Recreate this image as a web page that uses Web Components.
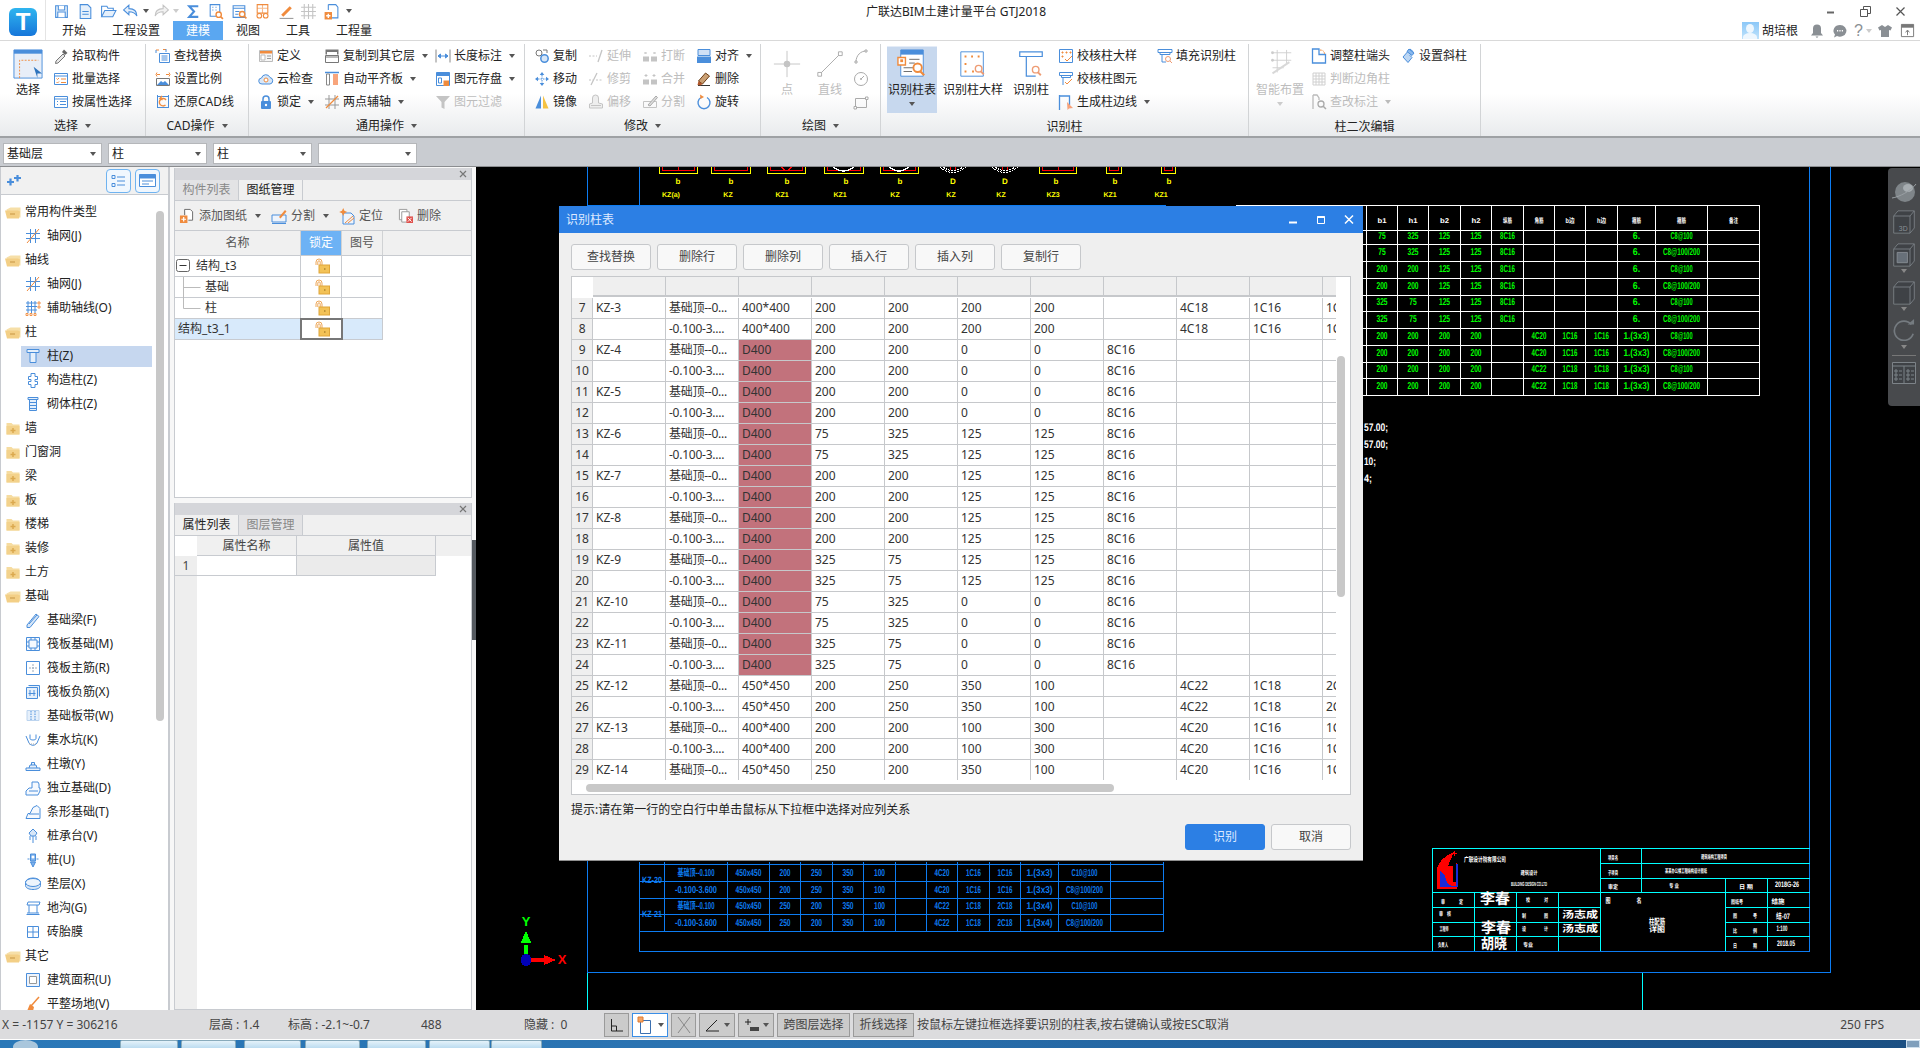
<!DOCTYPE html>
<html lang="zh">
<head>
<meta charset="utf-8">
<title>GTJ2018</title>
<style>
html,body{margin:0;padding:0;height:100%;overflow:hidden;background:#000}
body{font:12px/16px "Noto Sans","Noto Sans CJK SC",sans-serif;color:#222}
</style>
</head>
<body>
<gt-app>
  <gt-titlebar></gt-titlebar>
  <gt-ribbon>
    <rb-group label="选择" w="146" caret>
      <rb-big icon="select" label="选择" style="margin-left:6px;width:44px"></rb-big>
      <rb-col style="margin-left:3px">
        <rb-item icon="picker">拾取构件</rb-item>
        <rb-item icon="batch">批量选择</rb-item>
        <rb-item icon="attr">按属性选择</rb-item>
      </rb-col>
    </rb-group>
    <rb-group label="CAD操作" w="103" caret>
      <rb-col style="margin-left:9px">
        <rb-item icon="find">查找替换</rb-item>
        <rb-item icon="scale">设置比例</rb-item>
        <rb-item icon="restore">还原CAD线</rb-item>
      </rb-col>
    </rb-group>
    <rb-group label="通用操作" w="276" caret>
      <rb-col style="margin-left:9px;width:66px">
        <rb-item icon="define">定义</rb-item>
        <rb-item icon="cloud">云检查</rb-item>
        <rb-item icon="lock" caret>锁定</rb-item>
      </rb-col>
      <rb-col style="width:111px">
        <rb-item icon="copyfloor" caret>复制到其它层</rb-item>
        <rb-item icon="align" caret>自动平齐板</rb-item>
        <rb-item icon="axis2" caret>两点辅轴</rb-item>
      </rb-col>
      <rb-col>
        <rb-item icon="dim" caret>长度标注</rb-item>
        <rb-item icon="store" caret>图元存盘</rb-item>
        <rb-item icon="filter" off>图元过滤</rb-item>
      </rb-col>
    </rb-group>
    <rb-group label="修改" w="236" caret>
      <rb-col style="margin-left:9px;width:54px">
        <rb-item icon="copy">复制</rb-item>
        <rb-item icon="move">移动</rb-item>
        <rb-item icon="mirror">镜像</rb-item>
      </rb-col>
      <rb-col style="width:54px">
        <rb-item icon="extend" off>延伸</rb-item>
        <rb-item icon="trim" off>修剪</rb-item>
        <rb-item icon="offset" off>偏移</rb-item>
      </rb-col>
      <rb-col style="width:54px">
        <rb-item icon="break" off>打断</rb-item>
        <rb-item icon="merge" off>合并</rb-item>
        <rb-item icon="split" off>分割</rb-item>
      </rb-col>
      <rb-col>
        <rb-item icon="alignb" caret>对齐</rb-item>
        <rb-item icon="erase">删除</rb-item>
        <rb-item icon="rotate">旋转</rb-item>
      </rb-col>
    </rb-group>
    <rb-group label="绘图" w="120" caret>
      <rb-big icon="point" label="点" off style="margin-left:6px;width:40px"></rb-big>
      <rb-big icon="line" label="直线" off style="width:46px"></rb-big>
      <rb-col style="margin-left:0">
        <rb-item icon="arc" off></rb-item>
        <rb-item icon="circle" off></rb-item>
        <rb-item icon="rect" off></rb-item>
      </rb-col>
    </rb-group>
    <rb-group label="识别柱" w="368">
      <rb-big icon="rectable" label="识别柱表" caret active style="margin-left:6px;width:50px"></rb-big>
      <rb-big icon="recdetail" label="识别柱大样" style="margin-left:1px;width:70px"></rb-big>
      <rb-big icon="reccol" label="识别柱" style="width:46px"></rb-big>
      <rb-col style="margin-left:4px;width:99px">
        <rb-item icon="chk1">校核柱大样</rb-item>
        <rb-item icon="chk2">校核柱图元</rb-item>
        <rb-item icon="genedge" caret>生成柱边线</rb-item>
      </rb-col>
      <rb-col>
        <rb-item icon="fillcol">填充识别柱</rb-item>
      </rb-col>
    </rb-group>
    <rb-group label="柱二次编辑" w="232">
      <rb-big icon="smart" label="智能布置" caret off style="margin-left:5px;width:52px"></rb-big>
      <rb-col style="margin-left:5px;width:89px">
        <rb-item icon="adjust">调整柱端头</rb-item>
        <rb-item icon="corner" off>判断边角柱</rb-item>
        <rb-item icon="query" off caret>查改标注</rb-item>
      </rb-col>
      <rb-col>
        <rb-item icon="slant">设置斜柱</rb-item>
      </rb-col>
    </rb-group>
  </gt-ribbon>
  <gt-combos>
    <gt-combo>基础层</gt-combo>
    <gt-combo>柱</gt-combo>
    <gt-combo>柱</gt-combo>
    <gt-combo></gt-combo>
  </gt-combos>
  <gt-main>
    <gt-tree></gt-tree>
    <gt-docks>
      <gt-dock tabs="构件列表,图纸管理" active="1" style="height:330px"><gt-drawings></gt-drawings></gt-dock>
      <gt-dock tabs="属性列表,图层管理" active="0" style="flex:1"><gt-props></gt-props></gt-dock>
    </gt-docks>
    <gt-splitter></gt-splitter>
    <gt-cad>
      <gt-dialog title="识别柱表"></gt-dialog>
      <gt-viewbar></gt-viewbar>
    </gt-cad>
  </gt-main>
  <gt-status></gt-status>
  <gt-taskbar></gt-taskbar>
</gt-app>

<script>
const B='#4a8edb',O='#f08b3d',G='#c4c4c4',L='#e6f0fb';
const st=`fill="none" stroke="${B}"`;
const gs=`fill="none" stroke="${G}"`;
const ICONS={
  save:`<path d="M2.5 2.5h11v11h-11z" fill="${L}" stroke="${B}"/><path d="M5 2.5v4h6v-4M4.5 13.5v-5h7v5" fill="#fff" stroke="${B}"/>`,
  doc:`<path d="M3 1.5h7l3 3v10H3z" fill="${L}" stroke="${B}"/><path d="M5 8h6M5 10.5h6" ${st}/>`,
  open:`<path d="M1.5 13V3h5l1 2h5v2" ${st}/><path d="M1.5 13l3-6h10.500l-3 6z" fill="${L}" stroke="${B}"/>`,
  undo:`<path d="M6.500 2L1.500 6.500 6.500 11V8.300c3.500 0 6 1 7.500 4 0-4-2.500-7-7.500-7z" fill="${L}" stroke="${B}"/>`,
  redo:`<path d="M9.500 2l5 4.500-5 4.500V8.300c-3.500 0-6 1-7.500 4 0-4 2.500-7 7.500-7z" fill="#f2f2f2" stroke="${G}"/>`,
  sigma:`<path d="M12.500 3H4l4.500 5L4 13h8.500" fill="none" stroke="${B}" stroke-width="2"/>`,
  qcalc:`<path d="M3 1.500h9v11H3z" ${st}/><path d="M5 4h1M8 4h1M5 6.500h1M8 6.500h1" stroke="${B}"/><circle cx="11" cy="11" r="2.500" fill="#fff" stroke="${O}" stroke-width="1.300"/><path d="M13 13l2 2" stroke="${O}" stroke-width="1.500"/>`,
  qtab:`<path d="M2 2.500h11v11H2z" ${st}/><path d="M2 5h11M4 8h4M4 10.500h3" stroke="${B}"/><circle cx="10.500" cy="10.500" r="2.500" fill="#fff" stroke="${O}" stroke-width="1.300"/><path d="M12.500 12.500l2 2" stroke="${O}" stroke-width="1.500"/>`,
  qglass:`<path d="M3 1.500h10v8H3z" fill="none" stroke="${O}"/><path d="M3 5h10M8 1.500v8" stroke="${O}" stroke-opacity=".6"/><circle cx="5" cy="12" r="2.200" fill="none" stroke="${O}"/><circle cx="11" cy="12" r="2.200" fill="none" stroke="${O}"/>`,
  qpen:`<path d="M3 11L11 3l2 2-8 8z" fill="${O}"/><path d="M1.500 14.500h13" stroke="#999"/>`,
  qgrid:`<path d="M4 1v14M8 1v14M12 1v14M1 4h14M1 8h14M1 12h14" stroke="${G}"/>`,
  qnew:`<path d="M5 1.500h7l2 2.500v10H8" fill="none" stroke="${B}"/><path d="M1.500 8.500h7v7h-7z" fill="${O}"/><path d="M5 10v4M3 12h4" stroke="#fff" stroke-width="1.300"/><path d="M5 1.500v5" stroke="${B}"/>`,
  picker:`<path d="M3 13l7-7 2 2-7 7-2.500.5z" fill="#e8e8e8" stroke="#777"/><path d="M9 4l2-2.500 3.500 3.500L12 7z" fill="#666"/>`,
  batch:`<path d="M1.500 2.500h13v11h-13z" fill="#fff" stroke="${B}"/><path d="M1.500 5h13" stroke="${B}"/><path d="M3.500 7.500l1 1 1.500-1.500M3.500 11l1 1 1.500-1.500" fill="none" stroke="${O}"/><path d="M8 8h5M8 11.500h5" stroke="${O}"/>`,
  attr:`<path d="M1.500 2.500h13v11h-13z" fill="#fff" stroke="${B}"/><path d="M1.500 5h13" stroke="${B}"/><path d="M4 7.500h1M7 7.500h6M4 10.500h1M7 10.500h6" stroke="${B}"/>`,
  find:`<path d="M4.500 5.500h10v9h-10z" fill="#fff" stroke="${B}"/><path d="M6.500 8h6M6.500 10h6M6.500 12h6" stroke="${B}"/><path d="M1 2h3M8 1.500h3" stroke="${O}"/><path d="M1 2v3" stroke="${B}"/><path d="M11 1v3" stroke="${B}"/>`,
  scale:`<path d="M1.500 7.500h13v7h-13z" fill="#fff" stroke="#777"/><path d="M2 14l4-4 2 1.500 2-1.500 4 4z" fill="${B}"/><path d="M2 3.500h3M14 3.500h-3M2 1.500l-1 2 1 2M14 1.500l1 2-1 2" ${`fill="none" stroke="${O}"`}/>`,
  restore:`<path d="M2.500 2.500h11v11h-11z" ${st}/><path d="M11 6A3.700 3.700 0 1 0 10.500 11" fill="none" stroke="${O}" stroke-width="1.400"/><path d="M7 2l-2 2.500 2.500 1.500" fill="none" stroke="${O}" stroke-width="1.400"/><path d="M2 2h1M13 2h1M2 13h1M13 13h1" stroke="${B}" stroke-width="2"/>`,
  define:`<path d="M1.500 2.500h13v11h-13z" fill="#f6f6f6" stroke="#bbb"/><path d="M2 3h12v2.500H2z" fill="${O}"/><path d="M3 7h4v5H3z" fill="#fff" stroke="#bbb"/><path d="M9 8h4M9 10.500h4" stroke="#999"/>`,
  cloud:`<path d="M4 13a3 3 0 0 1-.5-6A4.500 4.500 0 0 1 12 6.500 3.300 3.300 0 0 1 12 13z" fill="#d9e7f7" stroke="${B}"/><circle cx="8" cy="9" r="2" fill="#fff" stroke="${O}"/>`,
  lock:`<path d="M5 7V5a3 3 0 0 1 6 0v2" fill="none" stroke="${B}" stroke-width="1.500"/><rect x="3" y="7" width="10" height="8" rx="1" fill="${B}"/><circle cx="8" cy="11" r="1.200" fill="#fff"/>`,
  copyfloor:`<path d="M1.500 1.500h13v5h-13z" fill="#777"/><path d="M3 4h10v3H3z" fill="#fff"/><path d="M1.500 7.500h13v7h-13z" fill="#fff" stroke="#777"/><path d="M1.500 9h13" stroke="#777"/>`,
  align:`<path d="M1 1.500h14" stroke="${B}" stroke-width="1.500"/><path d="M2.500 3h3v11h-3z" fill="#fff" stroke="#888"/><path d="M9 3h5v11H9z" fill="#f8a57c"/>`,
  axis2:`<path d="M1 5h14M1 11h14M5 1v14M11 1v14" stroke="#999"/><path d="M2 14L14 2" stroke="${O}" stroke-width="1.300"/>`,
  dim:`<path d="M1 1.500v13M15 1.500v13" stroke="#888"/><path d="M3 8h10M3 8l2.500-2v4zM13 8l-2.500-2v4z" fill="${B}" stroke="${B}"/>`,
  store:`<path d="M1.500 1.500h13v13h-13z" fill="#fff" stroke="${B}"/><path d="M1.500 1.500h13V5h-13z" fill="${B}"/><path d="M3.500 7h3v5h-3z" ${st}/><path d="M8.500 9.500h5.500V15H8.500z" fill="${O}"/>`,
  filter:`<path d="M1 2h14L9.500 8v7l-3-1.500V8z" fill="${G}"/>`,
  copy:`<circle cx="5" cy="5" r="3" fill="none" stroke="#777"/><circle cx="10.500" cy="10.500" r="3.700" fill="#d7e6f7" stroke="${B}" stroke-width="1.500"/><path d="M9 2h4v3" fill="none" stroke="#777"/>`,
  move:`<path d="M8 1l2.300 3H5.700zM8 15l2.300-3H5.700zM1 8l3-2.300v4.600zM15 8l-3-2.300v4.600z" fill="${B}"/><path d="M8 4v8M4 8h8" stroke="${B}" stroke-dasharray="1.500 1"/>`,
  mirror:`<path d="M7 1.500v13H1.500z" fill="${B}"/><path d="M9 1.500v13h5.500z" fill="#f5c242"/>`,
  extend:`<path d="M1 8h8" stroke="${G}" stroke-dasharray="2 1.500"/><path d="M10 14L14 2" stroke="${G}" stroke-width="1.300"/>`,
  trim:`<path d="M1 9h4M8 9h7" stroke="${G}" stroke-dasharray="2 1.500"/><path d="M3 14L9 2" stroke="${G}" stroke-width="1.300"/>`,
  offset:`<path d="M1.500 14v-4l3-1V4a3 3 0 0 1 6 0v5l4 1v4z" fill="#eee" stroke="${G}"/><path d="M3 11.500h10" stroke="${G}"/>`,
  break:`<path d="M1 8.500h6v5H1zM9 8.500h6v5H9z" fill="${G}"/><path d="M2.500 4l2 2M2.500 6l2-2M11.500 4l2 2M11.500 6l2-2" stroke="${G}"/>`,
  merge:`<path d="M1 8.500h6v5H1zM9 8.500h6v5H9z" fill="${G}"/><path d="M4 3v3M2.500 4.500h3M12 3v3M10.500 4.500h3" stroke="${G}"/>`,
  split:`<path d="M1.500 7.500h13v6h-13z" ${gs}/><path d="M6 11L14 2l1.500 1.500L8 12z" fill="#ddd" stroke="#aaa"/>`,
  alignb:`<path d="M2 1.500h12v6H2z" fill="#cfe0f5" stroke="${B}"/><path d="M1 8.500h14v6.500H1z" fill="${B}"/>`,
  erase:`<path d="M2 14.500h12" stroke="#333"/><path d="M2.500 10l7-8 4 3-7 8z" fill="#caa074" stroke="#6b3d16"/><path d="M2.500 10l4 3-2 1.500-3-.5z" fill="#b0562a"/>`,
  rotate:`<path d="M5 3.500A6 6 0 1 0 11 3.500" fill="none" stroke="${B}" stroke-width="1.400"/><path d="M4 .5l4 2.500-3.500 2z" fill="${O}"/>`,
  select:`<path d="M1 1h30v30H1z" fill="#e8eef8" stroke="${B}"/><path d="M1 1h30v4H1z" fill="${B}"/><path d="M7 31V12h20" fill="none" stroke="${O}" stroke-dasharray="2 1.500"/><path d="M22 19l9 7-5 0v5z" fill="#2f74bd"/>`,
  point:`<path d="M16 2v28M2 16h28" stroke="${G}"/><circle cx="16" cy="16" r="3.500" fill="${G}"/>`,
  line:`<path d="M5 27L27 5" stroke="#aaa"/><path d="M3 25h4v4H3zM25 3h4v4h-4z" fill="#fff" stroke="#aaa"/>`,
  arc:`<path d="M3 14C3 7 8 3 13 3" fill="none" stroke="#aaa"/><path d="M2 13h2v2H2zM12 2h2v2h-2z" fill="#fff" stroke="#aaa"/>`,
  circle:`<circle cx="8" cy="8" r="6.500" fill="none" stroke="#aaa"/><path d="M8 8l3-3" stroke="#aaa"/><circle cx="8" cy="8" r="1" fill="#aaa"/>`,
  rect:`<path d="M2.500 4.500h11v9h-11z" fill="none" stroke="#aaa"/><path d="M1 12.500h2.500v2.500H1zM12.500 3h2.500v2.500h-2.500z" fill="#fff" stroke="#aaa"/>`,
  rectable:`<path d="M4 1h24v28H4z" fill="#fff" stroke="${B}"/><path d="M4 1h24v5H4z" fill="${B}"/><path d="M1 9h8v8H1z" fill="#fff" stroke="${O}" stroke-width="1.500"/><path d="M3.500 11h3v3h-3z" fill="${O}"/><path d="M7 20h11M7 24h9M13 11h11M13 15h6" stroke="#666"/><circle cx="22" cy="20" r="4.500" fill="#fff" stroke="${O}" stroke-width="2"/><path d="M25 24l4 4" stroke="${O}" stroke-width="2.500"/>`,
  recdetail:`<path d="M3 3h24v26H3z" fill="none" stroke="${B}"/><path d="M7 7h2v2H7zM14 7h2v2h-2zM21 7h2v2h-2zM7 15h2v2H7zM7 23h2v2H7zM15 23h2v2h-2z" fill="${O}"/><circle cx="22" cy="21" r="3.500" fill="#fff" stroke="#ee9c74" stroke-width="1.500"/><path d="M24.500 24l3 3" stroke="#ee9c74" stroke-width="2"/>`,
  reccol:`<path d="M4 3h24v5H4z" fill="none" stroke="${B}" stroke-width="1.300"/><path d="M8 8h16M11 8v21h10" fill="none" stroke="${B}" stroke-width="1.300"/><circle cx="21" cy="22" r="3.500" fill="#fff" stroke="#ee9c74" stroke-width="1.500"/><path d="M23.500 25l3 3" stroke="#ee9c74" stroke-width="2"/>`,
  chk1:`<path d="M1.500 1.500h13v13h-13z" fill="none" stroke="${B}"/><path d="M4 4h1v1H4zM8 4h1v1H8zM12 4h1v1h-1zM4 8h1v1H4z" fill="${O}" stroke="${O}"/><path d="M7 11l2 2 5-5" fill="none" stroke="${O}"/>`,
  chk2:`<path d="M1.500 1.500h13v3h-13zM3.500 4.500v2h9v-2M5 6.500V14" fill="none" stroke="${B}"/><path d="M7 11l2 2 5-5" fill="none" stroke="${O}"/>`,
  genedge:`<path d="M1.500 1v15M1.500 2h10v9" fill="none" stroke="${B}" stroke-width="1.300"/><path d="M9 8l6 6-4 .5L9.500 16z" fill="#f7a27a"/>`,
  fillcol:`<path d="M1 1.500h14v3H1zM3 4.500v2h10v-2M5 6.500V14h4" fill="none" stroke="${B}"/><circle cx="11" cy="11" r="2.500" fill="#fff" stroke="#ee9c74"/><path d="M13 13l2 2" stroke="#ee9c74"/>`,
  smart:`<path d="M8 4h20M8 12h20M8 20h12M13 1v24M23 1v14" stroke="#d0d0d0"/><path d="M8 26L26 14" stroke="#d8d8d8" stroke-width="2"/><circle cx="8" cy="4" r="1.500" fill="#ccc"/><circle cx="8" cy="12" r="1.500" fill="#ccc"/>`,
  adjust:`<path d="M1.500 1v14h13V6.500H8V1z" fill="none" stroke="${B}" stroke-width="1.300"/><path d="M9 2c3 0 4.500 1.500 4.500 4" fill="none" stroke="${O}" stroke-dasharray="1.500 1"/>`,
  corner:`<path d="M2 2h12v12H2zM2 5h12M2 8h12M2 11h12M5 2v12M8 2v12M11 2v12" fill="none" stroke="#d0d0d0"/>`,
  query:`<path d="M2 1h4l2 3v2M2 1v14" fill="none" stroke="#bbb" stroke-width="1.300"/><circle cx="10" cy="10" r="3" fill="none" stroke="#aaa" stroke-width="1.300"/><path d="M12 12l3 3" stroke="#aaa" stroke-width="1.500"/>`,
  slant:`<path d="M1 9l7-8 3 2.500-3 4 2 2-4 5z" fill="#bcd6f3" stroke="${B}" transform="translate(2 0)"/><path d="M9 1l5 4-2 2.500-5-4z" fill="#8ab8ec" stroke="${B}"/>`,
  folderopen:`<path d="M1.500 5.500l4-2h10v10h-13z" fill="#f6dfa8"/><path d="M0 6.500h13l2 1-1 7H2z" fill="#f3cf86"/><path d="M5 10h5" stroke="#d6a958" stroke-width="1.500"/>`,
  folder:`<path d="M1.500 3h5l1.500 1.500h6.500v10h-13z" fill="#f6dca0"/><path d="M1.500 6h13v8.500h-13z" fill="#f3d28c"/><path d="M8 8v5M5.500 10.500h5" stroke="#dba94f" stroke-width="1.500"/>`,
  grid:`<path d="M1 5.500h14M1 10.500h14M5.500 1v14M10.500 1v14" stroke="${B}"/><path d="M2 15L14 1" stroke="${O}"/>`,
  grid2:`<path d="M1 3h11M1 6.500h11M1 10h11M3 1v12M6.500 1v12M10 1v12" stroke="${B}"/><path d="M13 2h2v2h-2zM13 6h2v2h-2zM1 13.500h2v2H1zM5 13.500h2v2H5zM9 13.500h2v2H9z" fill="none" stroke="${O}" stroke-width=".9"/>`,
  col:`<path d="M2 1.500h12v3H2zM5 4.500V14.500h6V4.500" fill="#e6f0fb" stroke="${B}"/>`,
  gzz:`<path d="M6 1.500h4v3h2.500v3H10v2h2.500v3H10v3H6v-3H3.500v-3H6v-2H3.500v-3H6z" fill="#fff" stroke="${B}"/>`,
  qtz:`<path d="M3 1.500h10v2H3zM4.500 3.500h7v11h-7zM4.500 6.500h7M4.500 9.500h7M4.500 12.500h7" fill="#e6f0fb" stroke="${B}"/>`,
  jcl:`<path d="M2 13l9-11 3 2.500-9 11H2z" fill="#d7e6f7" stroke="${B}"/><path d="M4 12l8-9" stroke="${B}"/>`,
  fb:`<path d="M1.500 1.500h13v13h-13zM4 4h8v8H4zM1.500 6h2.500M1.500 10h2.500M12 6h2.500M12 10h2.500M6 1.500V4M10 1.500V4M6 12v2.500M10 12v2.500" fill="#f5f9fe" stroke="${B}"/>`,
  fz:`<path d="M1.500 1.500h13v13h-13z" fill="#fff" stroke="${B}"/><path d="M8 4v8M4 8h8" stroke="#9ab" stroke-dasharray="2 1"/>`,
  ff:`<path d="M1.500 3.500h11v11h-11zM3.500 1.500h11v11" fill="#e6f0fb" stroke="${B}"/><path d="M5 6v6M9 6v6M3.500 9.500h7" stroke="${B}"/>`,
  bd:`<path d="M2 2.500h12v10H2z" fill="#e6f0fb" stroke="#bcd4ef"/><path d="M6 3v9M10 3v9" stroke="${B}" stroke-dasharray="1.500 1"/>`,
  jsk:`<path d="M1 4l3 7c2 3 6 3 8 0l3-7M5 2.500v4c0 2 6 2 6 0v-4" fill="none" stroke="${B}"/><path d="M4 12h8" stroke="#aaa" stroke-dasharray="1 1"/>`,
  zd:`<path d="M1 12h14v2.500H1zM4 12l1-3h6l1 3M6.500 9V6.500h3V9" fill="#e6f0fb" stroke="${B}"/>`,
  dl:`<path d="M1 11l3-3h3V2h6l1 2v4h1v3l-2 4H1z" fill="#f5f9fe" stroke="${B}"/><path d="M4 11h9" stroke="${B}"/>`,
  tx:`<path d="M1 14.500l2-5h2l3-6 4-2 3 3v10zM4 10h10" fill="#f5f9fe" stroke="${B}"/>`,
  cpt:`<path d="M8 1l4 4-2 3H6L4 5z" fill="#d7e6f7" stroke="${B}"/><path d="M5 8v4M8 8v7M11 8v4" stroke="${B}"/>`,
  pile:`<path d="M5.500 2h5v7h-5zM2.500 7h2M11.500 7h2M5.500 10h5L8 15z" fill="#7fb1ea" stroke="${B}"/><circle cx="8" cy="5" r="1.500" fill="#fff"/>`,
  dc:`<ellipse cx="8" cy="6.500" rx="7.500" ry="4.500" fill="#d7e6f7" stroke="${B}"/><path d="M.5 6.500v3c0 2.500 3.500 4 7.500 4s7.500-1.500 7.500-4v-3" fill="#d7e6f7" stroke="${B}"/><ellipse cx="8" cy="6.500" rx="7.500" ry="4" fill="#edf4fc" stroke="${B}"/>`,
  dg:`<path d="M1.500 14.500h13M2 13h12M3 2h12l-1 3H2zM4 5v8M12 5v8" fill="none" stroke="${B}"/>`,
  ztm:`<path d="M2.500 2.500h11v11h-11zM8 2.500v11M2.500 8h11" fill="#fff" stroke="${B}"/>`,
  jzmj:`<path d="M1.500 1.500h13v13h-13z" fill="#eef4fc" stroke="${B}"/><path d="M4.500 4.500h7v7h-7z" fill="#fff" stroke="#999"/>`,
  pzcd:`<path d="M14 1L6 10" stroke="${O}" stroke-width="1.500"/><path d="M2 15l3-7 4 3-1 4z" fill="${O}"/><path d="M1 15h8" stroke="${B}" stroke-width="1.500"/>`,
  tadd:`<path d="M6 1.500h6l2.500 2.500v9H10" fill="#fff" stroke="#666"/><path d="M6 1.500v6" stroke="#666"/><path d="M1 8h8v8H1z" fill="${O}"/><path d="M5 9.500v5M2.500 12h5" stroke="#fff" stroke-width="1.300"/>`,
  tsplit:`<path d="M1 7h14v7H1zM1 15.500h14" fill="#eef4fc" stroke="${B}"/><path d="M8 9L14 2l1.500 1.500-6 7z" fill="${O}"/>`,
  tloc:`<path d="M4 5h8l3 3v8H4z" fill="#eef4fc" stroke="${B}"/><path d="M6 15l8-7M9 15l6-5" stroke="${O}"/><path d="M4 0l1.500 3.500L9 5 5.500 6.500 4 10 2.500 6.500-1 5 2.500 3.500z" fill="${O}" transform="translate(1 0) scale(.8)"/>`,
  tdel:`<path d="M1.500 1.500h8v11h-8z" fill="#fff" stroke="#999"/><path d="M4 4h8v11H4z" fill="#fff" stroke="#999"/><path d="M9 9h7v7H9z" fill="#e0514c"/><path d="M10.500 10.500l4 4M14.500 10.500l-4 4" stroke="#fff"/>`,
  padlock:`<path d="M2 7V4a3 3 0 0 1 6 0v3M3.800 7V4a1.200 1.200 0 0 1 2.400 0v3" fill="none" stroke="#eea85a"/><rect x="5" y="7" width="10.500" height="8" fill="#f3c257" stroke="#e0a63a"/><path d="M10 11h1.500" stroke="#8a6418"/>`,
  bell:`<path d="M8 1.500a4 4 0 0 1 4 4V10l2 2.500H2L4 10V5.500a4 4 0 0 1 4-4zM6.500 13.500h3L8 15z" fill="#8a8f94"/>`,
  chat:`<path d="M8 2a6.500 5.800 0 1 1-3 11L2 14.500l1-3A6.500 5.800 0 0 1 8 2z" fill="#8a8f94"/><path d="M5 7.800h1.200M7.400 7.800h1.200M9.800 7.800H11" stroke="#fff" stroke-width="1.400"/>`,
  shirt:`<path d="M5 2L1 4.500l1.500 3L4 7v7h8V7l1.500.5 1.500-3L11 2 8 4z" fill="#8a8f94"/>`,
  skin:`<path d="M1.500 1.500h13v13h-13z" fill="#fff" stroke="#777"/><path d="M1.500 1.500h13V5h-13z" fill="#777"/><path d="M8 13V8M6 10l2-2.500 2 2.500" fill="none" stroke="#777"/>`,
};

function setup(el,css,html){
  if(el.shadowRoot) return el.shadowRoot;
  el.attachShadow({mode:'open'});
  el.shadowRoot.innerHTML=`<style>${css}</style>${html}`;
  return el.shadowRoot;
}
function svg(name,size){
  const vb=['select','point','line','rectable','recdetail','reccol','smart'].includes(name)?32:16;
  return `<svg width="${size}" height="${size}" viewBox="0 0 ${vb} ${vb}" style="display:block;flex:none;overflow:visible" shape-rendering="geometricPrecision">${ICONS[name]||''}</svg>`;
}
const caretCss=`.caret{display:inline-block;width:0;height:0;border:3.500px solid transparent;border-top:4px solid #555;border-bottom:0;flex:none}`;

class GtApp extends HTMLElement{
  connectedCallback(){
    setup(this,`:host{display:flex;flex-direction:column;width:1920px;height:1048px;overflow:hidden;background:#fff}`,`<slot></slot>`);
  }
}

class GtTitlebar extends HTMLElement{
  connectedCallback(){
    // centres of the quick access icons, the gaps are worked out from them
    const qat=[['save',61],['doc',85],['open',108],['undo',130],['c',146],['redo',162],['c2',177],['sigma',195],['qcalc',217],['qtab',241],['qglass',264],['qpen',288],['qgrid',310],['qnew',333],['c3',351]];
    let x=46,qh='';
    qat.forEach(([n,c])=>{
      const isC=n[0]=='c'&&n.length<3;
      const w=isC?7:17;
      const left=c-w/2-x;
      x=c+w/2;
      qh+=isC?`<span class="caret" style="margin-left:${left}px${n=='c2'?';border-top-color:#ccc':''}"></span>`:`<span style="margin-left:${left}px">${svg(n,17)}</span>`;
    });
    setup(this,`
      :host{display:flex;height:41px;border-bottom:1px solid #d9d9d9;box-sizing:border-box;background:#fff}
      ${caretCss}
      .logo{width:46px;flex:none;border-right:1px solid #e4e4e4;box-sizing:border-box;padding:8px 0 0 9px;position:relative}
      .logo b{display:flex;align-items:center;justify-content:center;width:28px;height:28px;border-radius:6px;background:linear-gradient(#2fb5ef,#1676da);color:#fff;font:bold 24px/28px "Liberation Sans",sans-serif}
      .right{flex:1;display:flex;flex-direction:column}
      .qrow{height:21px;display:flex;align-items:center}
      .qat{display:flex;align-items:center;width:820px;flex:none;padding-top:1px}
      .title{width:190px;white-space:nowrap;padding-top:2px}
      .win{margin-left:auto;display:flex;align-items:center;padding-top:1px}
      .win span{width:35px;display:flex;justify-content:center}
      .trow{height:19px;display:flex;align-items:stretch}
      .tabs{display:flex;margin-left:3px}
      .tabs span{padding:0 13px;line-height:19px}
      .tabs .on{background:#5aa7f1;color:#fff}
      .user{margin-left:auto;display:flex;align-items:center;margin-right:5px}
      .user .ava{width:17px;height:17px;background:linear-gradient(#8cc8f8,#bfe2fb);margin-right:3px;position:relative;overflow:hidden}
      .user .ava i{position:absolute;left:4.500px;top:2px;width:8px;height:9px;border-radius:50%;background:#eef7fe}
      .user .ava u{position:absolute;left:1.500px;top:11px;width:14px;height:8px;border-radius:50% 50% 0 0;background:#eef7fe}
    `,`
      <div class="logo"><b>T</b></div>
      <div class="right">
        <div class="qrow">
          <div class="qat">${qh}</div>
          <div class="title">广联达BIM土建计量平台 GTJ2018</div>
          <div class="win">
            <span><svg width="10" height="10"><path d="M1 6.500h7" stroke="#666" stroke-width="2"/></svg></span>
            <span><svg width="11" height="11"><path d="M3.500 3V.5h7v7H8M.5 3.500h7v7h-7z" fill="#fff" stroke="#555"/></svg></span>
            <span style="margin-right:2px"><svg width="11" height="11"><path d="M1.500 1.500l8 8M9.500 1.500l-8 8" stroke="#555" stroke-width="1.200"/></svg></span>
          </div>
        </div>
        <div class="trow">
          <div class="tabs"><span>开始</span><span>工程设置</span><span class="on">建模</span><span>视图</span><span>工具</span><span>工程量</span></div>
          <div class="user">
            <div class="ava"><i></i><u></u></div>
            <span>胡培根</span>
            <span style="margin-left:11px">${svg('bell',16)}</span>
            <span style="margin-left:7px">${svg('chat',16)}</span>
            <span style="margin-left:6px;font:16px/16px 'Liberation Sans',sans-serif;color:#8a8f94;width:10px">?</span>
            <span class="caret" style="border-top-color:#ccc;margin:0 5px 0 2px"></span>
            <span>${svg('shirt',16)}</span>
            <span style="margin-left:7px">${svg('skin',15)}</span>
          </div>
        </div>
      </div>
    `);
  }
}

class GtRibbon extends HTMLElement{
  connectedCallback(){
    setup(this,`:host{display:flex;height:97px;box-sizing:border-box;padding-top:3px;background:linear-gradient(#fff 0,#fff 55%,#e9ebed 100%);border-bottom:2px solid #9ea1a4}`,`<slot></slot>`);
  }
}
class RbGroup extends HTMLElement{
  connectedCallback(){
    const c=this.hasAttribute('caret')?`<span class="caret"></span>`:'';
    setup(this,`
      :host{display:flex;flex-direction:column;box-sizing:border-box;width:${this.getAttribute('w')}px;height:92px;border-right:1px solid #d2d4d6;flex:none}
      ${caretCss}
      .body{display:flex;height:72px}
      .label{height:19px;display:flex;align-items:center;justify-content:center;gap:7px;padding-top:${c?0:2}px}
    `,`<div class="body"><slot></slot></div><div class="label"><span>${this.getAttribute('label')}</span>${c}</div>`);
  }
}
class RbCol extends HTMLElement{
  connectedCallback(){
    setup(this,`:host{display:flex;flex-direction:column;flex:none}`,`<slot></slot>`);
  }
}
class RbItem extends HTMLElement{
  connectedCallback(){
    const off=this.hasAttribute('off');
    setup(this,`
      :host{display:flex;align-items:center;height:23px;white-space:nowrap;flex:none;color:${off?'#bdbdbd':'#222'}}
      ${caretCss}
      .ic{width:16px;margin-right:3px;flex:none}
      .caret{margin-left:7px;${off?'border-top-color:#bbb':''}}
    `,`<span class="ic">${svg(this.getAttribute('icon'),16)}</span><slot></slot>${this.hasAttribute('caret')?'<span class="caret"></span>':''}`);
  }
}
class RbBig extends HTMLElement{
  connectedCallback(){
    const off=this.hasAttribute('off'),on=this.hasAttribute('active');
    setup(this,`
      :host{display:flex;flex-direction:column;align-items:center;flex:none;height:67px;margin-top:2px;box-sizing:border-box;white-space:nowrap;color:${off?'#bdbdbd':'#222'};${on?'background:#c7d8ee;border-top:1px solid #e4ecf7;':''}}
      ${caretCss}
      .ic{height:${on?35:36}px;display:flex;align-items:flex-end;padding-bottom:3px;box-sizing:border-box}
      .t{line-height:16px}
      .caret{margin-top:4px;${off?'border-top-color:#ccc':''}}
    `,`<div class="ic">${svg(this.getAttribute('icon'),30)}</div><div class="t">${this.getAttribute('label')}</div>${this.hasAttribute('caret')?'<span class="caret"></span>':''}`);
  }
}

class GtCombos extends HTMLElement{
  connectedCallback(){
    setup(this,`:host{display:flex;height:29px;box-sizing:border-box;padding:5px 0 0 3px;gap:6px;background:#c9ccd1;border-bottom:1px solid #8b8d90}`,`<slot></slot>`);
  }
}
class GtCombo extends HTMLElement{
  connectedCallback(){
    setup(this,`
      :host{display:flex;align-items:center;width:99px;height:21px;box-sizing:border-box;background:#fff;border:1px solid #b5b7ba;padding:0 5px 0 3px}
      ${caretCss}
      .caret{margin-left:auto}
    `,`<slot></slot><span class="caret"></span>`);
  }
}

class GtMain extends HTMLElement{
  connectedCallback(){
    setup(this,`:host{display:flex;height:843px;background:#f7f7f7;overflow:hidden}`,`<slot></slot>`);
  }
}

const TREE=[
 [0,'folderopen','常用构件类型'],[1,'grid','轴网(J)'],[0,'folderopen','轴线'],[1,'grid','轴网(J)'],[1,'grid2','辅助轴线(O)'],
 [0,'folderopen','柱'],[1,'col','柱(Z)',1],[1,'gzz','构造柱(Z)'],[1,'qtz','砌体柱(Z)'],
 [0,'folder','墙'],[0,'folder','门窗洞'],[0,'folder','梁'],[0,'folder','板'],[0,'folder','楼梯'],[0,'folder','装修'],[0,'folder','土方'],
 [0,'folderopen','基础'],[1,'jcl','基础梁(F)'],[1,'fb','筏板基础(M)'],[1,'fz','筏板主筋(R)'],[1,'ff','筏板负筋(X)'],[1,'bd','基础板带(W)'],
 [1,'jsk','集水坑(K)'],[1,'zd','柱墩(Y)'],[1,'dl','独立基础(D)'],[1,'tx','条形基础(T)'],[1,'cpt','桩承台(V)'],[1,'pile','桩(U)'],
 [1,'dc','垫层(X)'],[1,'dg','地沟(G)'],[1,'ztm','砖胎膜'],[0,'folderopen','其它'],[1,'jzmj','建筑面积(U)'],[1,'pzcd','平整场地(V)']
];
class GtTree extends HTMLElement{
  connectedCallback(){
    const rows=TREE.map(([lv,ic,t,sel])=>`<div class="row l${lv}"><div class="in${sel?' sel':''}"><span class="ic">${svg(ic,16)}</span><span>${t}</span></div></div>`).join('');
    setup(this,`
      :host{display:flex;flex-direction:column;width:170px;flex:none;box-sizing:border-box;background:#fff;border-left:1px solid #c8cbd0;border-right:2px solid #c8cbd0;position:relative;overflow:hidden}
      .top{height:28px;flex:none;display:flex;align-items:center;background:#f1f1f1;border-bottom:1px solid #c8cbd0;box-sizing:border-box;padding-left:6px}
      .bt{width:25px;height:24px;box-sizing:border-box;border:1px solid #6fb3f0;border-radius:4px;background:#f0f7fe;display:flex;align-items:center;justify-content:center}
      .list{padding-top:5px;flex:1;overflow:hidden}
      .row{height:24px;display:flex;align-items:center;white-space:nowrap}
      .in{display:flex;align-items:center;height:21px;width:131px;box-sizing:border-box}
      .l0 .in{padding-left:4px}
      .l1 .in{margin-left:20px;padding-left:4px}
      .sel{background:#c6d7ef}
      .ic{width:16px;margin-right:4px;flex:none}
      .l0 .ic{margin-right:4px}
      .l1 .ic{margin-right:6px}
      .thumb{position:absolute;left:155px;top:44px;width:8px;height:510px;background:#c8c8c8;border-radius:4px}
    `,`
      <div class="top">
        <svg width="14" height="12" style="overflow:visible"><path d="M0 7h7M3.500 3.500v7M7 3h7M10.500 0v6.500" stroke="${B}" stroke-width="2.200"/></svg>
        <div class="bt" style="margin-left:85px"><svg width="15" height="14"><path d="M1 1.500h3v3H1zM1 9.500h3v3H1zM6 3h8M6 7h8M6 11h8" fill="none" stroke="${B}"/></svg></div>
        <div class="bt" style="margin-left:4px"><svg width="17" height="15"><path d="M.5 1.500h16v12H.5z" fill="#fff" stroke="${B}"/><path d="M.5 1.500h16v4H.5z" fill="${B}"/><path d="M3 8h11M3 11h7" stroke="${B}"/></svg></div>
      </div>
      <div class="list">${rows}</div>
      <div class="thumb"></div>
    `);
  }
}

class GtDocks extends HTMLElement{
  connectedCallback(){
    setup(this,`
      :host{display:flex;flex-direction:column;gap:5px;width:298px;flex:none;margin-left:4px;padding-top:1px;box-sizing:border-box}
    `,`<slot></slot>`);
  }
}
class GtDock extends HTMLElement{
  connectedCallback(){
    const tabs=this.getAttribute('tabs').split(','),act=+this.getAttribute('active');
    setup(this,`
      :host{display:flex;flex-direction:column;box-sizing:border-box;border:1px solid #c8cbd0;border-top:0;background:#fff;min-height:0}
      .cap{height:12px;flex:none;background:#d5d6da;display:flex;justify-content:flex-end;align-items:center;padding-right:4px}
      .tabs{height:21px;flex:none;display:flex;background:#f0f0f0;border-bottom:1px solid #c8cbd0;box-sizing:border-box}
      .tabs span{width:64px;text-align:center;line-height:20px;color:#888;background:#e3e3e5;border-right:1px solid #c8cbd0;box-sizing:border-box;font-size:12px}
      .tabs span.on{color:#222;background:#f0f0f0}
      .body{flex:1;min-height:0;display:flex;flex-direction:column}
      ::slotted(*){flex:1}
    `,`
      <div class="cap"><svg width="8" height="8"><path d="M1 1l6 6M7 1L1 7" stroke="#777" stroke-width="1.200"/></svg></div>
      <div class="tabs">${tabs.map((t,i)=>`<span class="${i==act?'on':''}">${t}</span>`).join('')}</div>
      <div class="body"><slot></slot></div>
    `);
  }
}
class GtDrawings extends HTMLElement{
  connectedCallback(){
    const lock=`<span style="padding-left:2px">${svg('padlock',16)}</span>`;
    const rows=[['结构_t3','box'],['基础','a'],['柱','b'],['结构_t3_1','sel']].map(([t,k])=>{
      let name='';
      if(k=='box') name=`<svg class="tw" width="15" height="14" style="margin:0 5px 0 1px"><rect x=".5" y=".5" width="13" height="12" rx="2" fill="#fff" stroke="#666"/><path d="M3.500 6.500h7" stroke="#333"/></svg>${t}`;
      if(k=='a') name=`<svg width="30" height="21" style="flex:none"><path d="M8.500 0v21M8.500 10.500h17" stroke="#bbb" fill="none"/></svg>${t}`;
      if(k=='b') name=`<svg width="30" height="21" style="flex:none"><path d="M8.500 0v10.500h17" stroke="#bbb" fill="none"/></svg>${t}`;
      if(k=='sel') name=`<span style="padding-left:3px">${t}</span>`;
      return `<div class="tr ${k=='sel'?'sel':''}"><div class="n">${name}</div><div class="l ${k=='sel'?'cur':''}">${lock}</div><div class="f"></div></div>`;
    }).join('');
    setup(this,`
      :host{display:flex;flex-direction:column;background:#fff;min-height:0;color:#333}
      .bar{height:30px;flex:none;display:flex;align-items:center;background:#f0f0f0;border-bottom:1px solid #c8cbd0;box-sizing:border-box;padding-left:4px;color:#555}
      ${caretCss}
      .bar svg{margin-right:4px}
      .bar span.t{white-space:nowrap}
      .head{height:25px;flex:none;display:flex;background:#f0f0f0;color:#555;box-sizing:border-box;border-bottom:1px solid #c8cbd0}
      .head div{text-align:center;line-height:24px;box-sizing:border-box;border-right:1px solid #d0d2d4}
      .w1{width:126px}.w2{width:41px}.w3{width:41px}
      .head .w2{background:#6db2f5;color:#fff}
      .tr{display:flex;height:21px;width:208px;box-sizing:border-box;border-bottom:1px solid #c8cbd0}
      .tr .n{width:126px;display:flex;align-items:center;box-sizing:border-box;border-right:1px solid #c8cbd0}
      .tr .l{width:41px;box-sizing:border-box;border-right:1px solid #c8cbd0;display:flex;align-items:center;justify-content:center}
      .tr .f{width:41px;box-sizing:border-box;border-right:1px solid #c8cbd0}
      .sel{background:#d8eafb}
      .cur{background:#fff;outline:2px solid #777;outline-offset:-1px}
    `,`
      <div class="bar">
        ${svg('tadd',15)}<span class="t" style="margin-left:1px">添加图纸</span><span class="caret" style="margin:0 10px 0 8px"></span>
        ${svg('tsplit',16)}<span class="t">分割</span><span class="caret" style="margin:0 10px 0 8px"></span>
        ${svg('tloc',16)}<span class="t">定位</span>
        <span style="width:15px"></span>${svg('tdel',15)}<span class="t">删除</span>
      </div>
      <div class="head"><div class="w1">名称</div><div class="w2">锁定</div><div class="w3">图号</div></div>
      ${rows}
    `);
  }
}
class GtProps extends HTMLElement{
  connectedCallback(){
    setup(this,`
      :host{display:grid;grid-template-columns:22px 100px 139px 1fr;grid-template-rows:20px 20px 1fr;background:#fff;color:#444;min-height:0}
      div{box-sizing:border-box;text-align:center;line-height:19px}
      .h{background:#f0f0f0;border-right:1px solid #c8cbd0;border-bottom:1px solid #c8cbd0}
      .g{background:#eee;border-bottom:1px solid #c8cbd0}
      .c{background:#fff;border-right:1px solid #c8cbd0;border-bottom:1px solid #c8cbd0}
      .v{background:#ebebeb;border-right:1px solid #c8cbd0;border-bottom:1px solid #c8cbd0}
    `,`
      <div></div><div class="h">属性名称</div><div class="h">属性值</div><div class="h" style="border-right:0;border-bottom:0"></div>
      <div class="g">1</div><div class="c"></div><div class="v"></div><div></div>
      <div style="background:#eee"></div>
    `);
  }
}

// the narrow gutter between the docks and the drawing, with its dark grip
class GtSplitter extends HTMLElement{
  connectedCallback(){
    setup(this,`
      :host{display:block;width:4px;flex:none;padding-top:373px;box-sizing:border-box;background:#f7f7f7}
      div{height:100px;background:#555a60}
    `,`<div></div>`);
  }
}

function cadDrawing(){
  let s='';
  const W='#fff',Gn='#00ff00',Bl='#0d7cf2',Cy='#00ffff',Ye='#ffff00',Re='#ff0000';
  const l=(x1,y1,x2,y2,c,w)=>{s+=`<path d="M${x1} ${y1}L${x2} ${y2}" stroke="${c}" stroke-width="${w||1}" fill="none"/>`};
  const t=(x,y,str,c,size,len,anchor)=>{s+=`<text x="${x}" y="${y}" fill="${c}" font-size="${size}" ${len?`textLength="${len}" lengthAdjust="spacingAndGlyphs"`:''} text-anchor="${anchor||'middle'}" dominant-baseline="middle">${str}</text>`};

  // outer frames
  l(587.5,167,587.5,973,Bl); l(639.5,167,639.5,205,Bl);
  l(1809.5,167,1809.5,951,Bl); l(1830.5,167,1830.5,973,Bl);
  l(587,972.5,1831,972.5,Bl); l(587,205.5,1166,205.5,Bl,1); l(1236,205.5,1363,205.5,W);
  l(587.5,973,587.5,1010,Cy); l(1642.5,973,1642.5,1010,Cy);

  // section drawings on top
  [[659,697,1],[711,750,0],[767,805,2],[824,863,3],[880,918,3],[1039,1076,1],[1106,1121,0],[1161,1175,0]].forEach(([a,b,k])=>{
    s+=`<path d="M${a+.5} 167V173.500H${b+.5}V167" stroke="${Ye}" fill="none"/>`;
    s+=`<path d="M${a+3.500} 167V170.500H${b-2.500}V167" stroke="${Re}" fill="none"/>`;
    if(k==1) l((a+b)/2+.5,167,(a+b)/2+.5,170,Re);
    if(k==2){l(a+14.500,167,a+17.500,170,Re);l(a+24.500,167,a+21.500,170,Re)}
    if(k==3) s+=`<path d="M${a+9} 167Q${(a+b)/2} 175 ${b-9} 167" stroke="${W}" fill="none" stroke-width="1.300"/>`;
  });
  [[940,966],[992,1018]].forEach(([a,b])=>{
    s+=`<path d="M${a} 167Q${(a+b)/2} 178 ${b} 167M${a+3} 167Q${(a+b)/2} 174 ${b-3} 167" stroke="${W}" stroke-dasharray="2 1" fill="none"/>`;
    l((a+b)/2-3,167,(a+b)/2-2,170,Re); l((a+b)/2+3,167,(a+b)/2+2,170,Re);
  });
  [[678,'b',662,'KZ(a)'],[731,'b',719,'KZ'],[787,'b',773,'KZ1'],[846,'b',831,'KZ1'],[900,'b',886,'KZ'],[953,'D',942,'KZ'],[1005,'D',992,'KZ'],[1056,'b',1044,'KZ3'],[1115,'b',1101,'KZ1'],[1169,'b',1152,'KZ1']].forEach(([x,c,lx,lb])=>{
    t(x,182,c,Ye,8); t(lx+9,195,lb,Ye,7,0); 
  });

  // white column table
  const vx=[1366.500,1397.500,1428.500,1460.500,1491.500,1523.500,1554.500,1585.500,1617.500,1655.500,1707.500,1759.500];
  const hy=[205.500,230.500,244.500,261.500,278.500,295.500,311.500,328.500,345.500,362.500,378.500,395.500];
  hy.forEach(y=>l(1363,y,1760,y,W));
  vx.forEach(x=>l(x,205,x,396,W));
  ['b1','h1','b2','h2','纵筋','角筋','b边','h边','箍筋','箍筋','备注'].forEach((h,i)=>t((vx[i]+vx[i+1])/2,221,h,W,7,h.length*3.5+2));
  const g=[
   ['75','325','125','125','8C16','','','','6.','C8@100'],
   ['75','325','125','125','8C16','','','','6.','C8@100/200'],
   ['200','200','125','125','8C16','','','','6.','C8@100'],
   ['200','200','125','125','8C16','','','','6.','C8@100/200'],
   ['325','75','125','125','8C16','','','','6.','C8@100'],
   ['325','75','125','125','8C16','','','','6.','C8@100/200'],
   ['200','200','200','200','','4C20','1C16','1C16','1.(3x3)','C8@100'],
   ['200','200','200','200','','4C20','1C16','1C16','1.(3x3)','C8@100/200'],
   ['200','200','200','200','','4C22','1C18','1C18','1.(3x3)','C8@100'],
   ['200','200','200','200','','4C22','1C18','1C18','1.(3x3)','C8@100/200']];
  g.forEach((r,ri)=>{
    const cy=(hy[ri+1]+hy[ri+2])/2-1;
    r.forEach((c,ci)=>{ if(c) t((vx[ci]+vx[ci+1])/2,cy,c,Gn,10,c.length*3.7)});
  });
  ['57.00;','57.00;','10;','4;'].forEach((x,i)=>t(1364,428+i*17,x,W,11,x.length*4,'start'));

  // blue table at the bottom
  const bx=[639.500,664.500,727.500,769.500,800.500,832.500,863.500,895.500,926.500,957.500,989.500,1020.500,1058.500,1110.500,1163.500];
  const by=[864.500,881.500,898.500,914.500,931.500];
  by.forEach(y=>l(639,y,1164,y,Bl));
  bx.forEach((x,i)=>l(x,862,x,i==0?951:931,Bl));
  l(1163.500,862,1163.500,931,Bl);
  l(639,951.500,1810,951.500,Bl);
  t(652,881,'KZ-20',Bl,9,20); t(652,915,'KZ-21',Bl,9,20);
  const br=[
   ['基础顶--0.100','450x450','200','250','350','100','','4C20','1C16','1C16','1.(3x3)','C10@100'],
   ['-0.100-3.600','450x450','200','250','350','100','','4C20','1C16','1C16','1.(3x3)','C8@100/200'],
   ['基础顶--0.100','450x450','250','200','350','100','','4C22','1C18','2C18','1.(3x4)','C10@100'],
   ['-0.100-3.600','450x450','250','200','350','100','','4C22','1C18','2C18','1.(3x4)','C8@100/200']];
  br.forEach((r,ri)=>{
    const cy=(by[ri]+by[ri+1])/2;
    r.forEach((c,ci)=>{ if(c) t((bx[ci+1]+bx[ci+2])/2,cy,c,Bl,10,Math.min(c.length*3.700,ci==0?42:99))});
  });

  // title block
  const cx=[1432.500,1474.500,1516.500,1558.500,1600.500,1641.500,1725.500,1767.500,1809.500];
  l(1432,848.500,1810,848.500,Cy);
  l(1600,863.500,1810,863.500,Cy); l(1600,878.500,1810,878.500,Cy); l(1432,892.500,1810,892.500,Cy);
  [907.500,922.500,936.500].forEach(y=>{l(1432,y,1601,y,Cy);l(1725,y,1810,y,Cy)});
  l(cx[0],848,cx[0],951,Cy); [1,2,3].forEach(i=>l(cx[i],892,cx[i],951,Cy));
  l(cx[4],848,cx[4],951,Cy); l(cx[5],848,cx[5],892,Cy); l(cx[6],878,cx[6],951,Cy); l(cx[7],878,cx[7],951,Cy);
  s+=`<path d="M1437 889V868Q1440 858 1454 852L1448 866V876Q1452 884 1456 882V863H1457V889z" fill="${Re}"/><path d="M1440 887V871L1445 875Q1446 884 1452 886H1456V864H1458V887z" fill="#1a2ad8"/><path d="M1448 866h5v16h-3l-2-4z" fill="${Re}"/><path d="M1452 853h5M1454.500 851v5" stroke="${Re}"/>`;
  t(1485,860,'广联设计院有限公司',W,7,42,'middle');
  t(1529,873,'建筑设计',W,6,17); t(1529,884,'BUILDING DESIGN CO.LTD',W,6,36);
  t(1613,858,'项目名',W,6,10); t(1714,857,'建筑结构工程项目',W,6,26);
  t(1613,873,'子项目',W,6,10); t(1686,871,'某某办公楼工程结构设计图纸',W,6,42);
  t(1613,887,'审定',W,6,10); t(1674,886,'专 业',W,6,10); t(1746,887,'日 期',W,6,14);
  t(1787,885,'2018G-26',W,8,24);
  t(1443,902,'审',W,6,4); t(1461,902,'定',W,6,4); t(1528,900,'校',W,6,4); t(1546,900,'对',W,6,4);
  t(1441,914,'审',W,6,4); t(1449,914,'核',W,6,4); t(1524,916,'制',W,6,4); t(1546,916,'图',W,6,4);
  t(1444,929,'工程师',W,6,9); t(1524,929,'设',W,6,4); t(1546,929,'计',W,6,4); t(1443,945,'负责人',W,6,10); t(1528,945,'专业',W,6,10);
  t(1495,900,'李春',W,15,30); t(1496,929,'李春',W,15,30); t(1494,945,'胡晓',W,15,26);
  t(1580,915,'汤志成',W,10,36); t(1580,929,'汤志成',W,10,36);
  t(1608,901,'图',W,7,5); t(1639,901,'名',W,7,5); t(1657,923,'柱配筋',W,9,16); t(1657,930,'详图',W,7,16);
  t(1737,902,'图纸号',W,6,12); t(1778,902,'结施',W,7,13);
  t(1735,916,'图',W,6,4); t(1755,916,'号',W,6,4); t(1783,917,'结-07',W,8,14);
  t(1735,931,'比',W,6,4); t(1755,931,'例',W,6,4); t(1782,929,'1:100',W,8,11);
  t(1735,946,'日',W,6,4); t(1755,946,'期',W,6,4); t(1786,944,'2018.05',W,8,18);

  // axis marker
  s+=`<path d="M526 960V945" stroke="#00ff00" stroke-width="4"/><path d="M526 930.500l5 12h-10z" fill="#00ff00"/>
      <path d="M526 960h19" stroke="#ff0000" stroke-width="4"/><path d="M556 960l-12-5v10z" fill="#ff0000"/>
      <ellipse cx="526" cy="960" rx="5.500" ry="6" fill="#0000b8"/>`;
  t(526,923,'Y',Gn,13); t(562,961,'X',Re,13);
  return s;
}

class GtCad extends HTMLElement{
  connectedCallback(){
    setup(this,`
      :host{display:block;position:relative;flex:1;background:#000;overflow:hidden}
      svg.dr{display:block;font-family:"Liberation Sans","Noto Sans CJK SC",sans-serif;font-weight:bold}
    `,`<svg class="dr" width="1444" height="843" viewBox="476 167 1444 843" shape-rendering="crispEdges" text-rendering="geometricPrecision">${cadDrawing()}</svg><slot></slot>`);
  }
}

const D='D400',TOP='基础顶--0...',SEC='-0.100-3....';
const HD=[['7','KZ-3','400*400',200,200,200,200,'','4C18','1C16','1C16'],['9','KZ-4',D,200,200,0,0,'8C16'],['11','KZ-5',D,200,200,0,0,'8C16'],['13','KZ-6',D,75,325,125,125,'8C16'],['15','KZ-7',D,200,200,125,125,'8C16'],['17','KZ-8',D,200,200,125,125,'8C16'],['19','KZ-9',D,325,75,125,125,'8C16'],['21','KZ-10',D,75,325,0,0,'8C16'],['23','KZ-11',D,325,75,0,0,'8C16'],['25','KZ-12','450*450',200,250,350,100,'','4C22','1C18','2C18'],['27','KZ-13','400*400',200,200,100,300,'','4C20','1C16','1C16'],['29','KZ-14','450*450',250,200,350,100,'','4C20','1C16','1C16']];
class GtDialog extends HTMLElement{
  connectedCallback(){
    let rows='';
    const cell=(v,cls)=>`<div class="c ${cls||''}">${v===undefined?'':v}</div>`;
    const mk=(num,name,sec,r)=>{
      let h=`<div class="n">${num}</div>`+cell(name)+cell(sec,'tight');
      h+=cell(r[0],r[0]==D?'red':'');
      for(let i=1;i<9;i++) h+=cell(r[i]);
      rows+=h;
    };
    HD.forEach((r,i)=>{
      const d=r.slice(2);
      mk(r[0],r[1],TOP,d);
      if(r[0]!='29') mk(+r[0]+1,'',SEC,d);
    });
    const btn=['查找替换','删除行','删除列','插入行','插入列','复制行'].map(b=>`<gt-button>${b}</gt-button>`).join('');
    setup(this,`
      :host{position:absolute;left:83px;top:39px;width:804px;height:655px;display:flex;flex-direction:column;background:#efefef;box-sizing:border-box;border-bottom:1px solid #8f8f8f;z-index:2}
      .cap{height:27px;flex:none;background:#2c7fe4;color:#dfeaff;display:flex;align-items:center;padding:0 6px 0 7px}
      .cap .ctl{margin-left:auto;display:flex;align-items:center;gap:12px}
      .tools{display:flex;gap:6px;padding:11px 0 0 12px;height:26px;flex:none}
      .grid{margin:6px 12px 0 12px;height:519px;flex:none;background:#fff;border:1px solid #c6c8cb;box-sizing:border-box;position:relative;overflow:hidden;color:#333}
      .clip{width:764px;height:503px;overflow:hidden}
      .t{display:grid;grid-template-columns:21px repeat(11,73px);grid-auto-rows:21px;width:824px}
      .hd{background:#efefef;border-right:1px solid #c6c8cb;border-bottom:2px solid #c6c8cb;height:20px;box-sizing:border-box;grid-row:1}
      .n{background:#efefef;text-align:center;line-height:20px;border-bottom:1px solid #c6c8cb;border-right:1px solid #c6c8cb;box-sizing:border-box;overflow:hidden;letter-spacing:-.2px}
      .c{border-right:1px solid #c6c8cb;border-bottom:1px solid #c6c8cb;box-sizing:border-box;padding-left:3px;line-height:20px;white-space:nowrap;overflow:hidden}
      .tight{letter-spacing:-.25px}
      .red{background:#c2727c}
      .vs{position:absolute;right:5px;top:79px;width:8px;height:241px;background:#c8c8c8;border-radius:4px}
      .hs{position:absolute;left:14px;bottom:2px;width:528px;height:8px;background:#c8c8c8;border-radius:4px}
      .hint{padding:7px 0 0 12px;height:16px;line-height:16px;flex:none;white-space:nowrap}
      .foot{margin-top:6px;display:flex;justify-content:flex-end;gap:6px;padding-right:12px}
    `,`
      <div class="cap">
        <span>${this.getAttribute('title')}</span>
        <div class="ctl">
          <svg width="16" height="12"><path d="M4 8.500h8" stroke="#fff" stroke-width="2"/></svg>
          <svg width="16" height="12"><path d="M4.500 2.500h7v7h-7z" fill="none" stroke="#fff"/><path d="M4.500 3h7" stroke="#fff" stroke-width="2"/></svg>
          <svg width="16" height="12"><path d="M4 1.500l8 8M12 1.500l-8 8" stroke="#fff" stroke-width="1.500"/></svg>
        </div>
      </div>
      <div class="tools">${btn}</div>
      <div class="grid">
        <div class="clip"><div class="t">
          <div style="grid-row:1;height:20px"></div>${'<div class="hd"></div>'.repeat(11)}
          ${rows}
        </div></div>
        <div class="vs"></div><div class="hs"></div>
      </div>
      <div class="hint">提示:请在第一行的空白行中单击鼠标从下拉框中选择对应列关系</div>
      <div class="foot"><gt-button primary>识别</gt-button><gt-button>取消</gt-button></div>
    `);
  }
}
class GtButton extends HTMLElement{
  connectedCallback(){
    const p=this.hasAttribute('primary');
    setup(this,`:host{display:flex;align-items:center;justify-content:center;width:80px;height:26px;box-sizing:border-box;border:1px solid ${p?'#2c7fe4':'#c6c8cb'};border-radius:3px;background:${p?'#2c7fe4':'#f8f8f8'};color:${p?'#dfeaff':'#444'}}`,`<slot></slot>`);
  }
}

class GtViewbar extends HTMLElement{
  connectedCallback(){
    const cube=(inner)=>`<svg width="24" height="24" viewBox="0 0 26 28" style="display:block"><path d="M1 7l5-6h19v20l-5 6H1z" fill="#3f4246" stroke="#7d8388"/><path d="M1 7h19v20M20 7l5-6" fill="none" stroke="#7d8388"/>${inner||''}</svg>`;
    setup(this,`
      :host{position:absolute;right:0;top:1px;width:32px;height:238px;z-index:1;background:#484a4d;border-radius:4px 0 0 4px;display:flex;flex-direction:column;align-items:center;box-sizing:border-box;padding-top:13px}
      ${caretCss}
      .caret{border-top-color:#888}
      .sep{width:24px;height:1px;background:#777;margin:6px 0 5px}
    `,`
      <svg width="26" height="22" viewBox="0 0 26 22" style="margin-bottom:7px;flex:none"><ellipse cx="14" cy="11" rx="10" ry="10" fill="#7f8589"/><ellipse cx="17" cy="7" rx="5" ry="4" fill="#a7adb1"/><path d="M1 17C8 16 20 10 25 3" stroke="#9aa0a4" fill="none"/></svg>
      <div style="margin-bottom:9px">${cube(`<text x="7" y="24" font-size="8" fill="#8a9096" font-family="Liberation Sans">3D</text>`)}</div>
      <div>${cube(`<path d="M5 11h12v12H5z" fill="#687079" stroke="#8a9096"/>`)}</div>
      <span class="caret" style="margin:2px 0 8px"></span>
      ${cube()}
      <span class="caret" style="margin:2px 0 8px"></span>
      <svg width="24" height="22" viewBox="0 0 26 24" style="flex:none"><path d="M21 6A10.500 10.500 0 1 0 23 16" fill="none" stroke="#757b80" stroke-width="1.800"/><path d="M17 6h7V0z" fill="#757b80"/></svg>
      <span class="caret" style="margin-top:4px"></span>
      <div class="sep"></div>
      <svg width="24" height="24" viewBox="0 0 24 24" style="flex:none"><path d="M.5 1.500h23v21H.5z" fill="#3f4246" stroke="#7d8388"/><path d="M.5 5h23M12 5v17M3 9h2v2H3zM3 13h2v2H3zM3 17h2v2H3zM15 9h2v2h-2zM15 13h2v2h-2zM15 17h2v2h-2zM7 10h3M7 14h3M7 18h3M19 10h3M19 14h3M19 18h3" fill="none" stroke="#7d8388"/></svg>
    `);
  }
}

class GtStatus extends HTMLElement{
  connectedCallback(){
    const ib=(w,html,extra)=>`<div class="tb ${extra||''}" style="width:${w}px">${html}</div>`;
    setup(this,`
      :host{display:flex;align-items:center;height:29px;flex:none;background:#dcdcde;color:#444;padding-left:2px;box-sizing:border-box;white-space:nowrap}
      ${caretCss}
      .f{flex:none}
      .tb{height:24px;margin-right:3px;box-sizing:border-box;border:1px solid #9a9a9a;background:#cbcbcb;display:flex;align-items:center;justify-content:center;flex:none;gap:4px}
      .tb.on{background:#fff;border:1px solid #3a8ee6}
      .tb.tx{color:#444}
    `,`
      <span class="f" style="width:207px">X = -1157 Y = 306216</span>
      <span class="f" style="width:79px">层高 : 1.4</span>
      <span class="f" style="width:133px">标高 : -2.1~-0.7</span>
      <span class="f" style="width:103px">488</span>
      <span class="f" style="width:80px">隐藏 :&nbsp; 0</span>
      ${ib(25,`<svg width="14" height="14"><path d="M1.500 1v12H13M1.500 8h5v5" fill="none" stroke="#222"/></svg>`)}
      ${ib(36,`<svg width="16" height="18" style="overflow:visible"><path d="M3.500 4.500h10v13h-10z" fill="none" stroke="#3a6fb0"/><path d="M1 1h5v5H1z" fill="#f5a464" stroke="#e07b2e"/></svg><span class="caret" style="margin-left:1px"></span>`,'on')}
      ${ib(25,`<svg width="14" height="18"><path d="M1 1l12 16M13 1L1 17" stroke="#888"/></svg>`)}
      ${ib(36,`<svg width="15" height="14"><path d="M1 13L12 2M1 13h13" stroke="#222" fill="none"/></svg><span class="caret"></span>`)}
      ${ib(36,`<svg width="15" height="14"><path d="M1 4h6M4 1v6" stroke="#222"/><path d="M6 9h9v4H6z" fill="#444"/></svg><span class="caret"></span>`)}
      ${ib(73,'跨图层选择','tx')}
      ${ib(61,'折线选择','tx')}
      <span class="f">按鼠标左键拉框选择要识别的柱表,按右键确认或按ESC取消</span>
      <span class="f" style="margin-left:auto;margin-right:36px">250 FPS</span>
    `);
  }
}

class GtTaskbar extends HTMLElement{
  connectedCallback(){
    const b=[[120,58],[181,55],[244,57],[305,55],[367,59],[429,61],[491,51]];
    let x=0,h='';
    b.forEach(([l,w])=>{h+=`<span class="b" style="margin-left:${l-x}px;width:${w}px"></span>`;x=l+w});
    setup(this,`
      :host{display:flex;height:9px;flex:none;overflow:hidden;border-top:1px solid #fff;box-sizing:border-box;background:linear-gradient(90deg,#2a78b8,#2a72b0 40%,#1e5a94 80%,#1b4f82);position:relative}
      .b{display:block;height:8px;flex:none;background:linear-gradient(#e4f2fa,#bcdcf0);border:1px solid #8ab;border-bottom:0;box-sizing:border-box;border-radius:2px 2px 0 0}
      .o{position:absolute;left:13px;top:0;width:25px;height:14px;border-radius:50%;background:#a9c6dc}
      .sd{position:absolute;right:0;top:0;width:14px;height:8px;background:#7f9fbc;border:1px solid #cfe0ee;box-sizing:border-box}
    `,`<span class="o"></span>${h}<span class="sd"></span>`);
  }
}

customElements.define('gt-app',GtApp);
customElements.define('gt-titlebar',GtTitlebar);
customElements.define('gt-ribbon',GtRibbon);
customElements.define('rb-group',RbGroup);
customElements.define('rb-col',RbCol);
customElements.define('rb-item',RbItem);
customElements.define('rb-big',RbBig);
customElements.define('gt-combos',GtCombos);
customElements.define('gt-combo',GtCombo);
customElements.define('gt-main',GtMain);
customElements.define('gt-tree',GtTree);
customElements.define('gt-docks',GtDocks);
customElements.define('gt-dock',GtDock);
customElements.define('gt-drawings',GtDrawings);
customElements.define('gt-props',GtProps);
customElements.define('gt-splitter',GtSplitter);
customElements.define('gt-cad',GtCad);
customElements.define('gt-dialog',GtDialog);
customElements.define('gt-button',GtButton);
customElements.define('gt-viewbar',GtViewbar);
customElements.define('gt-status',GtStatus);
customElements.define('gt-taskbar',GtTaskbar);
</script>
</body>
</html>
